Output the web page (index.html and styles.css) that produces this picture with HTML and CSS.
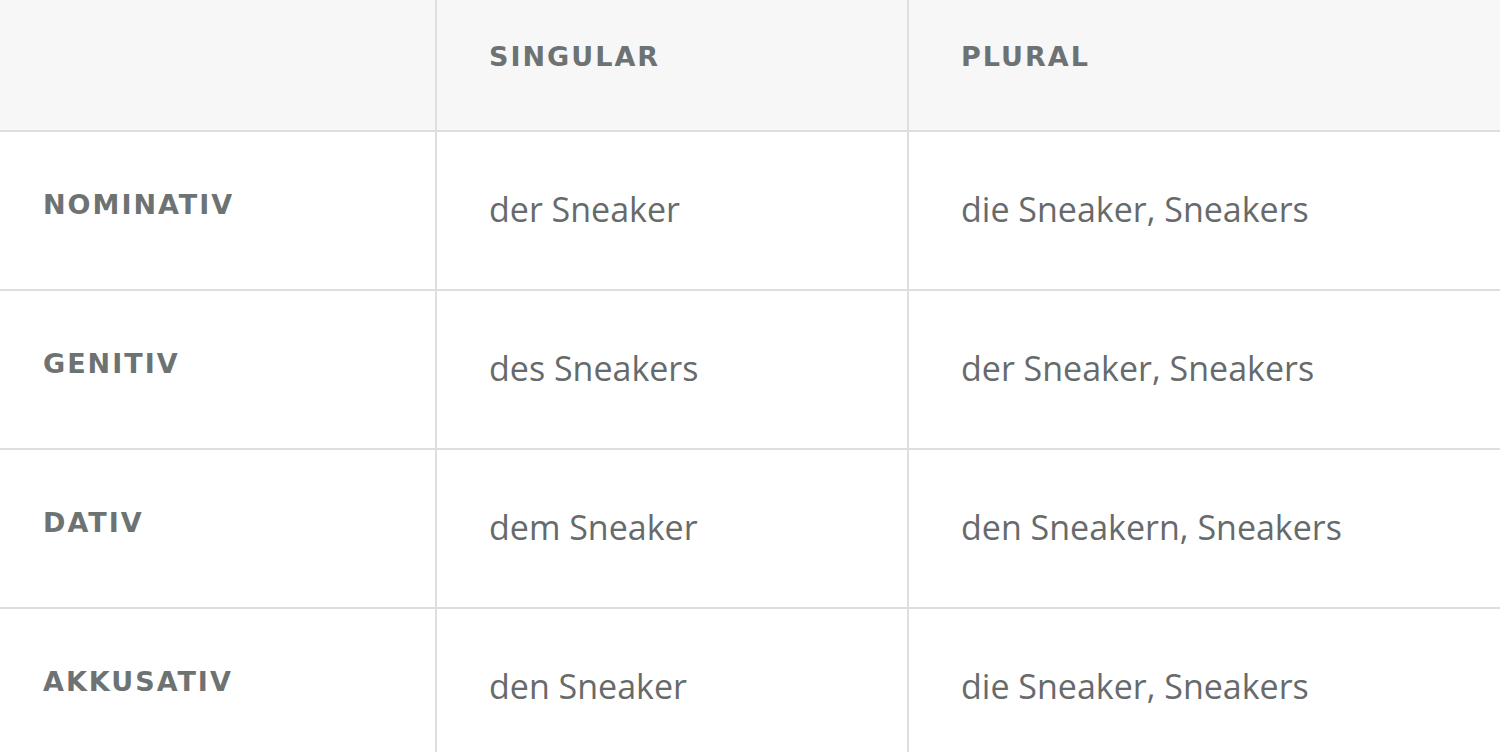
FILE: index.html
```html
<!DOCTYPE html>
<html lang="de">
<head>
<meta charset="utf-8">
<title>Deklination Sneaker</title>
<link rel="stylesheet" href="styles.css">
</head>
<body>
<div class="decl">
  <div class="cell head corner"></div>
  <div class="cell head col-head">Singular</div>
  <div class="cell head col-head last">Plural</div>

  <div class="cell case">Nominativ</div>
  <div class="cell form">der Sneaker</div>
  <div class="cell form last">die Sneaker, Sneakers</div>

  <div class="cell case">Genitiv</div>
  <div class="cell form">des Sneakers</div>
  <div class="cell form last">der Sneaker, Sneakers</div>

  <div class="cell case">Dativ</div>
  <div class="cell form">dem Sneaker</div>
  <div class="cell form last">den Sneakern, Sneakers</div>

  <div class="cell case">Akkusativ</div>
  <div class="cell form">den Sneaker</div>
  <div class="cell form last">die Sneaker, Sneakers</div>
</div>
</body>
</html>
```
FILE: styles.css
```css
html, body {
  margin: 0;
  padding: 0;
  background: #ffffff;
}
body {
  width: 1500px;
  height: 752px;
  overflow: hidden;
}
.decl {
  display: grid;
  grid-template-columns: 437px 472px 1fr;
  grid-template-rows: 132px repeat(4, 159px);
}
.cell {
  box-sizing: border-box;
  border-right: 2px solid #dedede;
  border-bottom: 2px solid #dedede;
  display: flex;
  align-items: center;
}
.cell.last {
  border-right: none;
}
.head {
  background: #f7f7f7;
}
.col-head {
  font-family: "DejaVu Sans", "Open Sans", sans-serif;
  font-weight: 700;
  font-size: 27px;
  letter-spacing: 2px;
  text-transform: uppercase;
  color: #6d7272;
  padding: 0 0 18px 52px;
}
.case {
  font-family: "DejaVu Sans", "Open Sans", sans-serif;
  font-weight: 700;
  font-size: 27px;
  letter-spacing: 2px;
  text-transform: uppercase;
  color: #6d7272;
  padding: 0 0 12px 43px;
}
.form {
  font-family: "Open Sans", "Noto Sans", sans-serif;
  font-weight: 400;
  font-size: 34px;
  color: #666a6b;
  padding: 0 0 4px 52px;
}
```
